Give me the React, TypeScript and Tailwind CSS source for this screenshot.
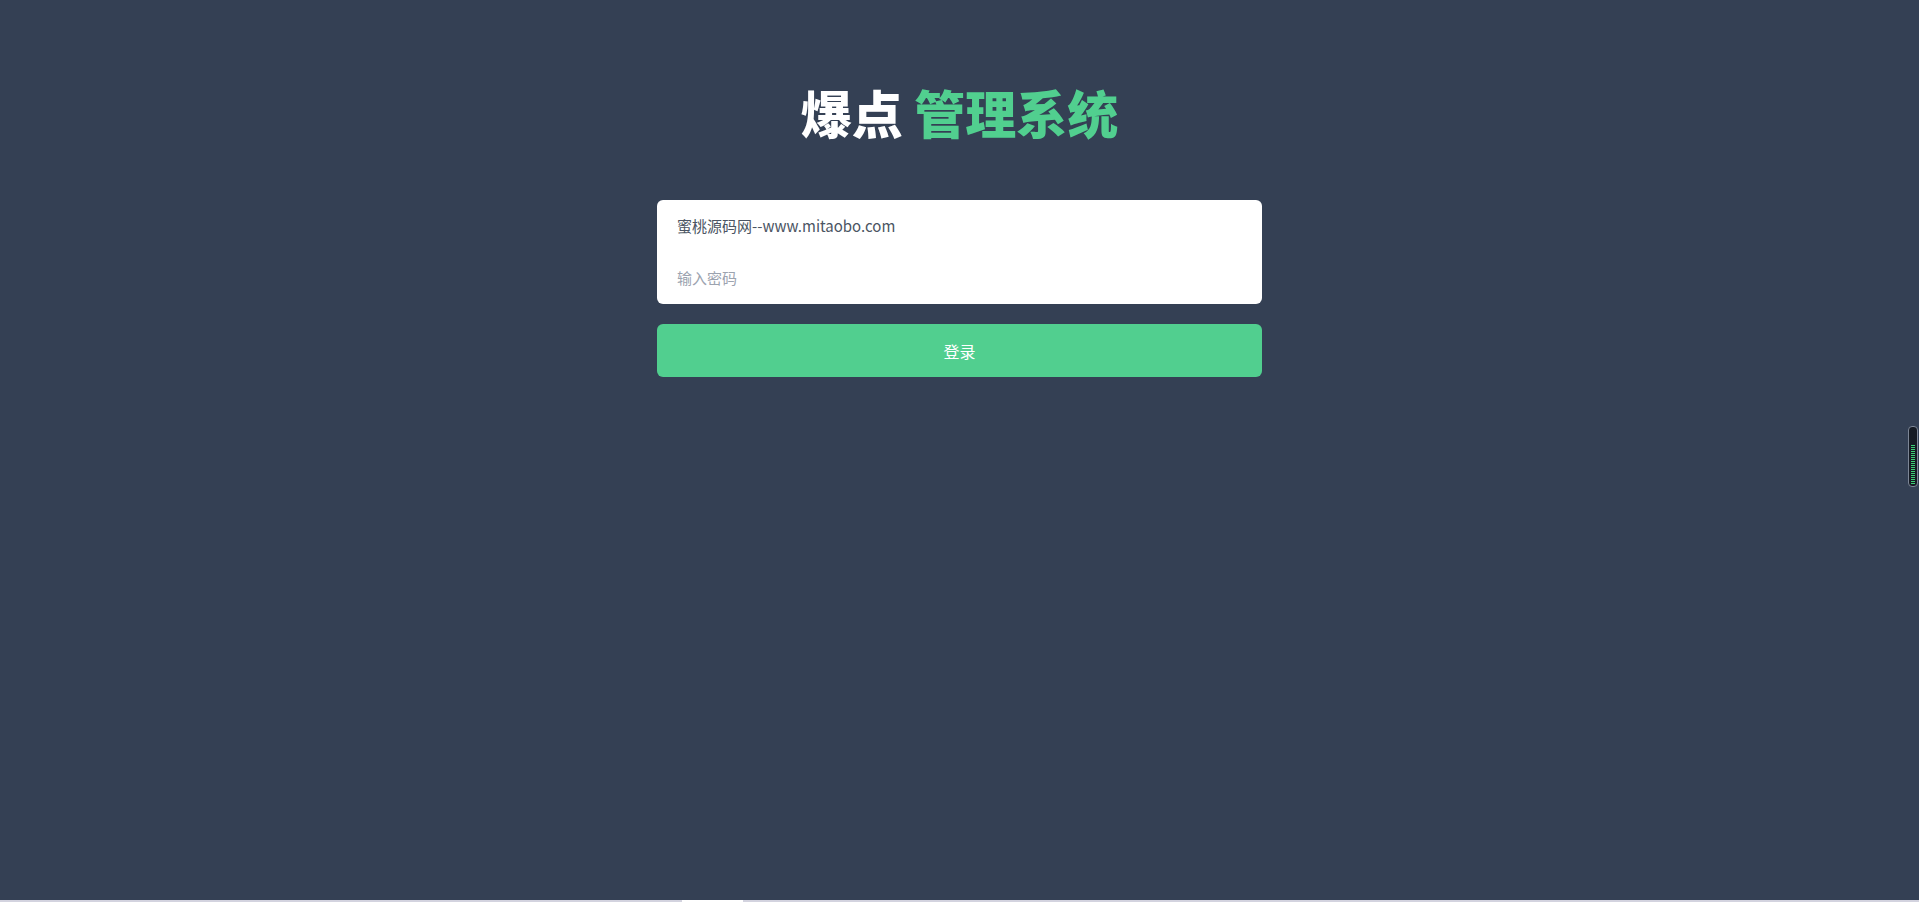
import { useState } from 'react'

function LevelMeter() {
  const bars = Array.from({ length: 20 })
  return (
    <div className="absolute right-px top-[426px] w-[10px] h-[61px] rounded-[4px] border border-[#7d8696] bg-[#161b24] flex flex-col justify-end px-[2px] pb-[2px] gap-px">
      {bars.map((_, i) => (
        <div key={i} className="h-px w-full bg-[#3ccf74]" />
      ))}
    </div>
  )
}

export default function App() {
  const [username, setUsername] = useState('蜜桃源码网--www.mitaobo.com')
  const [password, setPassword] = useState('')

  return (
    <div className="relative h-screen flex flex-col bg-[#344054] font-['Noto_Sans_CJK_SC','Noto_Sans',sans-serif] overflow-hidden">
      <div className="flex-1 flex flex-col items-center">
        <h1 className="mt-[87px] text-[51px] leading-[51px] font-black text-white tracking-normal">
          爆点 <span className="text-[#51cf8f]">管理系统</span>
        </h1>

        <form
          className="mt-[62px] w-[605px] flex flex-col"
          onSubmit={e => e.preventDefault()}
        >
          {/* Inputs */}
          <div className="bg-white rounded-md flex flex-col overflow-hidden">
            <input
              type="text"
              value={username}
              onChange={e => setUsername(e.target.value)}
              className="h-[50px] pt-px px-5 text-[15px] text-[#4b5563] outline-none bg-transparent"
            />
            <input
              type="password"
              placeholder="输入密码"
              value={password}
              onChange={e => setPassword(e.target.value)}
              className="h-[54px] px-5 text-[15px] text-[#4b5563] placeholder:text-[#9ca3af] outline-none bg-transparent"
            />
          </div>

          <button
            type="submit"
            className="mt-5 h-[53px] rounded-md bg-[#51cf8f] text-white text-[16px]"
          >
            登录
          </button>
        </form>
      </div>

      {/* bottom strip */}
      <div className="h-[2px] flex">
        <div className="w-[682px] bg-[#d3d3df]" />
        <div className="w-[61px] bg-white" />
        <div className="flex-1 bg-[#d3d3df]" />
      </div>

      <LevelMeter />
    </div>
  )
}
